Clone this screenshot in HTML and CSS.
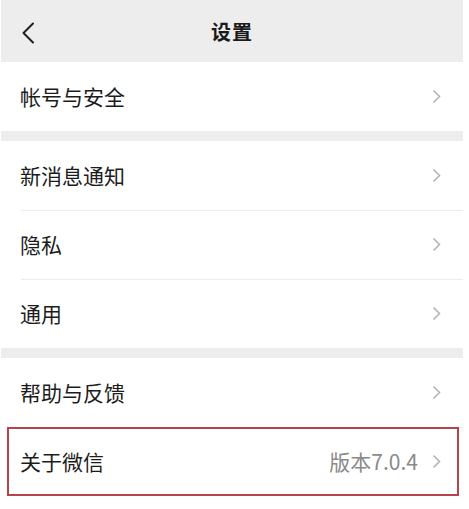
FILE: index.html
```html
<!DOCTYPE html>
<html lang="zh-CN">
<head>
<meta charset="utf-8">
<title>设置</title>
<link rel="stylesheet" href="styles.css">
</head>
<body>
<div class="screen">
  <header class="topbar">
    <svg class="back" width="14" height="22" viewBox="0 0 14 22"><path d="M12 1.5 L2.5 11 L12 20.5" fill="none" stroke="#1f1f1f" stroke-width="2" stroke-linecap="round" stroke-linejoin="round"/></svg>
    <h1 class="title">设置</h1>
  </header>
  <section class="group">
    <div class="row"><span class="label">帐号与安全</span><svg class="chev" width="9" height="15" viewBox="0 0 9 15"><path d="M1.5 1.5 L7.5 7.5 L1.5 13.5" fill="none" stroke="#b4b4b4" stroke-width="1.6"/></svg></div>
  </section>
  <section class="group">
    <div class="row"><span class="label">新消息通知</span><svg class="chev" width="9" height="15" viewBox="0 0 9 15"><path d="M1.5 1.5 L7.5 7.5 L1.5 13.5" fill="none" stroke="#b4b4b4" stroke-width="1.6"/></svg></div>
    <div class="row"><span class="label">隐私</span><svg class="chev" width="9" height="15" viewBox="0 0 9 15"><path d="M1.5 1.5 L7.5 7.5 L1.5 13.5" fill="none" stroke="#b4b4b4" stroke-width="1.6"/></svg></div>
    <div class="row"><span class="label">通用</span><svg class="chev" width="9" height="15" viewBox="0 0 9 15"><path d="M1.5 1.5 L7.5 7.5 L1.5 13.5" fill="none" stroke="#b4b4b4" stroke-width="1.6"/></svg></div>
  </section>
  <section class="group">
    <div class="row"><span class="label">帮助与反馈</span><svg class="chev" width="9" height="15" viewBox="0 0 9 15"><path d="M1.5 1.5 L7.5 7.5 L1.5 13.5" fill="none" stroke="#b4b4b4" stroke-width="1.6"/></svg></div>
    <div class="row highlight"><span class="label">关于微信</span><span class="value">版本7.0.4</span><svg class="chev" width="9" height="15" viewBox="0 0 9 15"><path d="M1.5 1.5 L7.5 7.5 L1.5 13.5" fill="none" stroke="#b4b4b4" stroke-width="1.6"/></svg></div>
  </section>
</div>
</body>
</html>
```

FILE: styles.css
```css
* { box-sizing: border-box; }
html, body { margin: 0; padding: 0; background: #ffffff; }
body {
  font-family: "Noto Sans CJK SC", "Noto Sans", sans-serif;
  color: #1a1a1a;
}
.screen {
  width: 462px;
  margin-left: 1px;
  background: #ededed;
  display: flex;
  flex-direction: column;
  gap: 10px;
  padding-bottom: 13px;
  background-clip: content-box;
}
.topbar {
  height: 62px;
  display: flex;
  align-items: center;
  justify-content: center;
  position: relative;
  background: #ededed;
  margin-bottom: -10px;
}
.back {
  position: absolute;
  left: 20px;
  top: 22px;
}
.title {
  margin: 0;
  font-size: 20px;
  font-weight: 700;
  color: #1a1a1a;
  letter-spacing: 1px;
}
.group {
  background: #ffffff;
  display: flex;
  flex-direction: column;
}
.row {
  height: 69px;
  display: flex;
  align-items: center;
  padding: 0 22px 0 19px;
  position: relative;
}
.row + .row::before {
  content: "";
  position: absolute;
  left: 20px;
  right: 0;
  top: 0;
  height: 1px;
  background: #ececec;
}
.label {
  flex: 1;
  font-size: 21px;
  line-height: 1;
  color: #1c1c1c;
}
.value {
  font-size: 21px;
  line-height: 1;
  color: #8a8a8a;
  margin-right: 14px;
}
.chev { display: block; }
.highlight::after {
  content: "";
  position: absolute;
  left: 6px;
  right: 4px;
  top: 0;
  bottom: 0;
  border: 2px solid #b6424c;
}
```
